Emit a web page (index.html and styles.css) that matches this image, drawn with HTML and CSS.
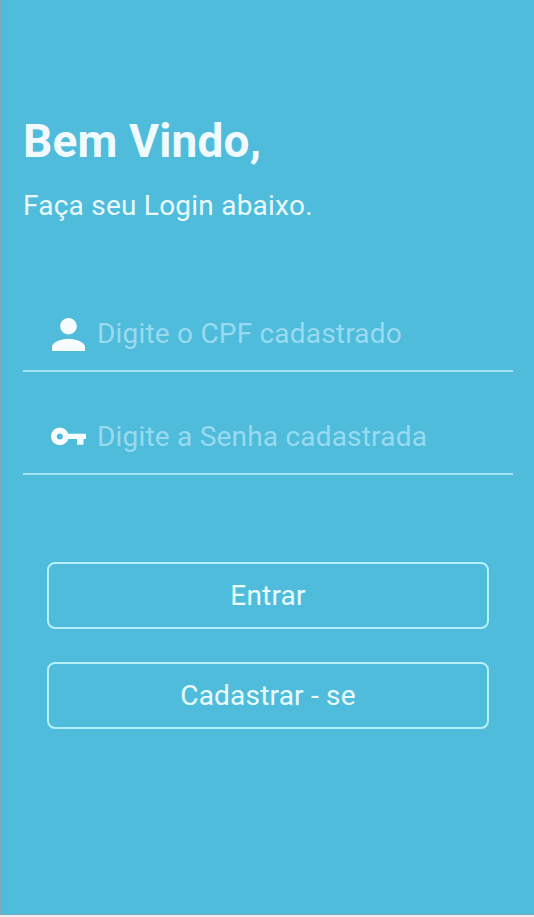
FILE: index.html
```html
<!DOCTYPE html>
<html lang="pt-BR">

<head>
    <meta charset="UTF-8">
    <meta name="viewport" content="width=device-width, initial-scale=1.0">
    <title>Login</title>
    <link rel="stylesheet" href="styles.css">
</head>

<body>
    <main class="login">
        <h1 class="title">Bem Vindo,</h1>
        <p class="subtitle">Faça seu Login abaixo.</p>

        <form class="form">
            <label class="field">
                <span class="field-icon">
                    <svg class="icon-user" viewBox="4 4 16 16">
                        <path d="M12 12c2.21 0 4-1.79 4-4s-1.79-4-4-4-4 1.79-4 4 1.79 4 4 4zm0 2c-2.67 0-8 1.34-8 4v2h16v-2c0-2.66-5.33-4-8-4z" />
                    </svg>
                </span>
                <input class="input" type="text" placeholder="Digite o CPF cadastrado">
            </label>
            <label class="field">
                <span class="field-icon">
                    <svg class="icon-key" viewBox="0 0 35 19">
                        <path d="M17.2 6.8A8.8 8.8 0 1 0 17.2 12H26V17.8H32.5V12H35V6.8zM8.8 12.4a3 3 0 1 1 0-6 3 3 0 0 1 0 6z" />
                    </svg>
                </span>
                <input class="input" type="password" placeholder="Digite a Senha cadastrada">
            </label>

            <div class="actions">
                <button class="btn" type="button">Entrar</button>
                <button class="btn" type="button">Cadastrar - se</button>
            </div>
        </form>
    </main>
</body>

</html>
```

FILE: styles.css
```css
* {
    box-sizing: border-box;
}

body {
    margin: 0;
    background-color: #ededed;
    font-family: Roboto, sans-serif;
}

.login {
    height: 915px;
    padding: 113px 21px 0 22px;
    background-color: #50bcdb;
    border-left: 1px solid #7fa9b8;
    border-bottom: 1px solid #7fa9b8;
}

.title {
    margin: 0;
    font-size: 46px;
    line-height: 56px;
    font-weight: bold;
    letter-spacing: 0.15px;
    color: #f0faff;
}

.subtitle {
    margin: 19px 0 0;
    font-size: 28px;
    line-height: 36px;
    letter-spacing: 0.23px;
    color: #e8faff;
}

.form {
    margin-top: 46px;
}

.field {
    display: flex;
    align-items: center;
    height: 102px;
    padding: 27px 0 0 27px;
    border-bottom: 2px solid #a5e3f4;
}

.field + .field {
    height: 103px;
    padding-top: 28px;
}

.field-icon {
    display: flex;
    justify-content: center;
    width: 37px;
    margin-right: 10px;
}

.icon-user {
    width: 33px;
    height: 33px;
    margin-top: 2px;
    fill: #f7fdff;
}

.icon-key {
    width: 35px;
    height: 19px;
    fill: #f7fdff;
}

.input {
    flex: 1;
    min-width: 0;
    padding: 0;
    border: none;
    outline: none;
    background: none;
    font-family: inherit;
    font-size: 28px;
    letter-spacing: 0.2px;
    color: #fff;
}

.input::placeholder {
    color: #98daef;
    opacity: 1;
}

.actions {
    display: flex;
    flex-direction: column;
    gap: 33px;
    padding: 87px 24px 0;
}

.btn {
    height: 67px;
    padding: 0 0 1px;
    border: 2px solid #b5f0fc;
    border-radius: 8px;
    background: none;
    font-family: inherit;
    font-size: 28px;
    letter-spacing: 0.2px;
    color: #e8fcff;
}
```
